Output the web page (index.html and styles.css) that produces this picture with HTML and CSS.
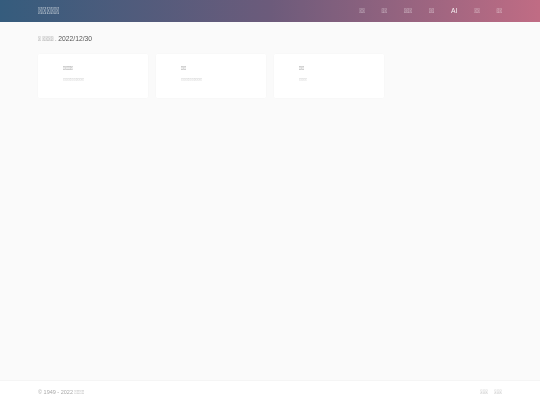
FILE: index.html
```html
<!DOCTYPE html>
<html lang="zh">
<head>
<meta charset="utf-8">
<title>&#xE000;&#xE000;&#xE000;&#xE000;&#xE000;</title>
<link rel="stylesheet" href="styles.css">
</head>
<body>
<header class="topbar">
  <a class="brand">&#xE000;&#xE000;&#xE000;&#xE000;&#xE000;</a>
  <nav class="nav">
    <a>&#xE000;&#xE000;</a>
    <a>&#xE000;&#xE000;</a>
    <a>&#xE000;&#xE000;&#xE000;</a>
    <a>&#xE000;&#xE000;</a>
    <a class="nav-ai">AI</a>
    <a>&#xE000;&#xE000;</a>
    <a>&#xE000;&#xE000;</a>
  </nav>
</header>
<main class="content">
  <p class="updated"><span class="small">&#xE000; &#xE000;&#xE000;&#xE000;&#xE000; . </span><span class="latin">2022/12/30</span></p>
  <section class="cards">
    <article class="card">
      <h3>&#xE000;&#xE000;&#xE000;&#xE000;</h3>
      <p>&#xE000;&#xE000;&#xE000;&#xE000;&#xE000;&#xE000;&#xE000;&#xE000;&#xE000;&#xE000;&#xE000;</p>
    </article>
    <article class="card">
      <h3>&#xE000;&#xE000;</h3>
      <p>&#xE000;&#xE000;&#xE000;&#xE000;&#xE000;&#xE000;&#xE000;&#xE000;&#xE000;&#xE000;&#xE000;</p>
    </article>
    <article class="card">
      <h3>&#xE000;&#xE000;</h3>
      <p>&#xE000;&#xE000;&#xE000;&#xE000;</p>
    </article>
  </section>
</main>
<footer class="footer">
  <span class="copy"><span class="latin">&copy; 1949 - 2022</span> &#xE000;&#xE000;&#xE000;&#xE000;</span>
  <span class="links"><a>&#xE000;&#xE000;&#xE000;</a><a>&#xE000;&#xE000;&#xE000;</a></span>
</footer>
</body>
</html>
```
FILE: styles.css
```css
html, body {
  margin: 0;
  height: 100%;
}
body {
  display: flex;
  flex-direction: column;
  height: 405px;
  overflow: hidden;
  background: #fafafa;
  color: #333;
  font-family: Roboto, sans-serif;
}
.latin,
.nav-ai {
  font-family: "Liberation Sans", Arial, sans-serif;
}
.topbar {
  display: flex;
  align-items: center;
  justify-content: space-between;
  box-sizing: border-box;
  height: 22px;
  padding: 0 38px 1px;
  background: linear-gradient(90deg, #355c7d, #6c5b7b 50%, #c06c84);
  color: #fff;
}
.brand,
.nav,
.updated,
.card,
.copy,
.links {
  will-change: opacity;
}
.brand {
  font-size: 9.6px;
  color: rgba(255, 255, 255, .72);
}
.nav {
  display: flex;
  align-items: center;
  gap: 16.7px;
  font-size: 6.3px;
  color: rgba(255, 255, 255, .6);
}
.nav-ai {
  font-size: 6.75px;
  color: rgba(255, 255, 255, .9);
}
.content {
  flex: 1;
  padding: 0 38px;
}
.updated {
  margin: 11.5px 0 10.5px;
  font-size: 6.75px;
  line-height: 9px;
  color: #555;
}
.small {
  font-size: 6.3px;
  color: #999;
}
.cards {
  display: flex;
  gap: 8px;
}
.card {
  box-sizing: border-box;
  width: 110px;
  height: 44px;
  padding: 10.5px 0 0 25px;
  background: #fff;
  border-radius: 2px;
  box-shadow: 0 0 2px rgba(0, 0, 0, .03);
}
.card h3 {
  margin: 0;
  font-size: 5.5px;
  font-weight: 400;
  line-height: 6px;
  color: #888;
}
.card p {
  margin: 6px 0 0;
  font-size: 4.3px;
  line-height: 6px;
  color: #ccc;
}
.footer {
  display: flex;
  align-items: center;
  justify-content: space-between;
  box-sizing: border-box;
  height: 25px;
  padding: 0 38px 3px;
  background: #fff;
  border-top: 1px solid #f5f5f5;
  font-size: 5.6px;
  color: #bbb;
}
.footer .latin {
  font-size: 5.5px;
  color: #aaa;
}
.links {
  display: flex;
  gap: 6px;
  font-size: 6px;
  color: #ccc;
}
```
